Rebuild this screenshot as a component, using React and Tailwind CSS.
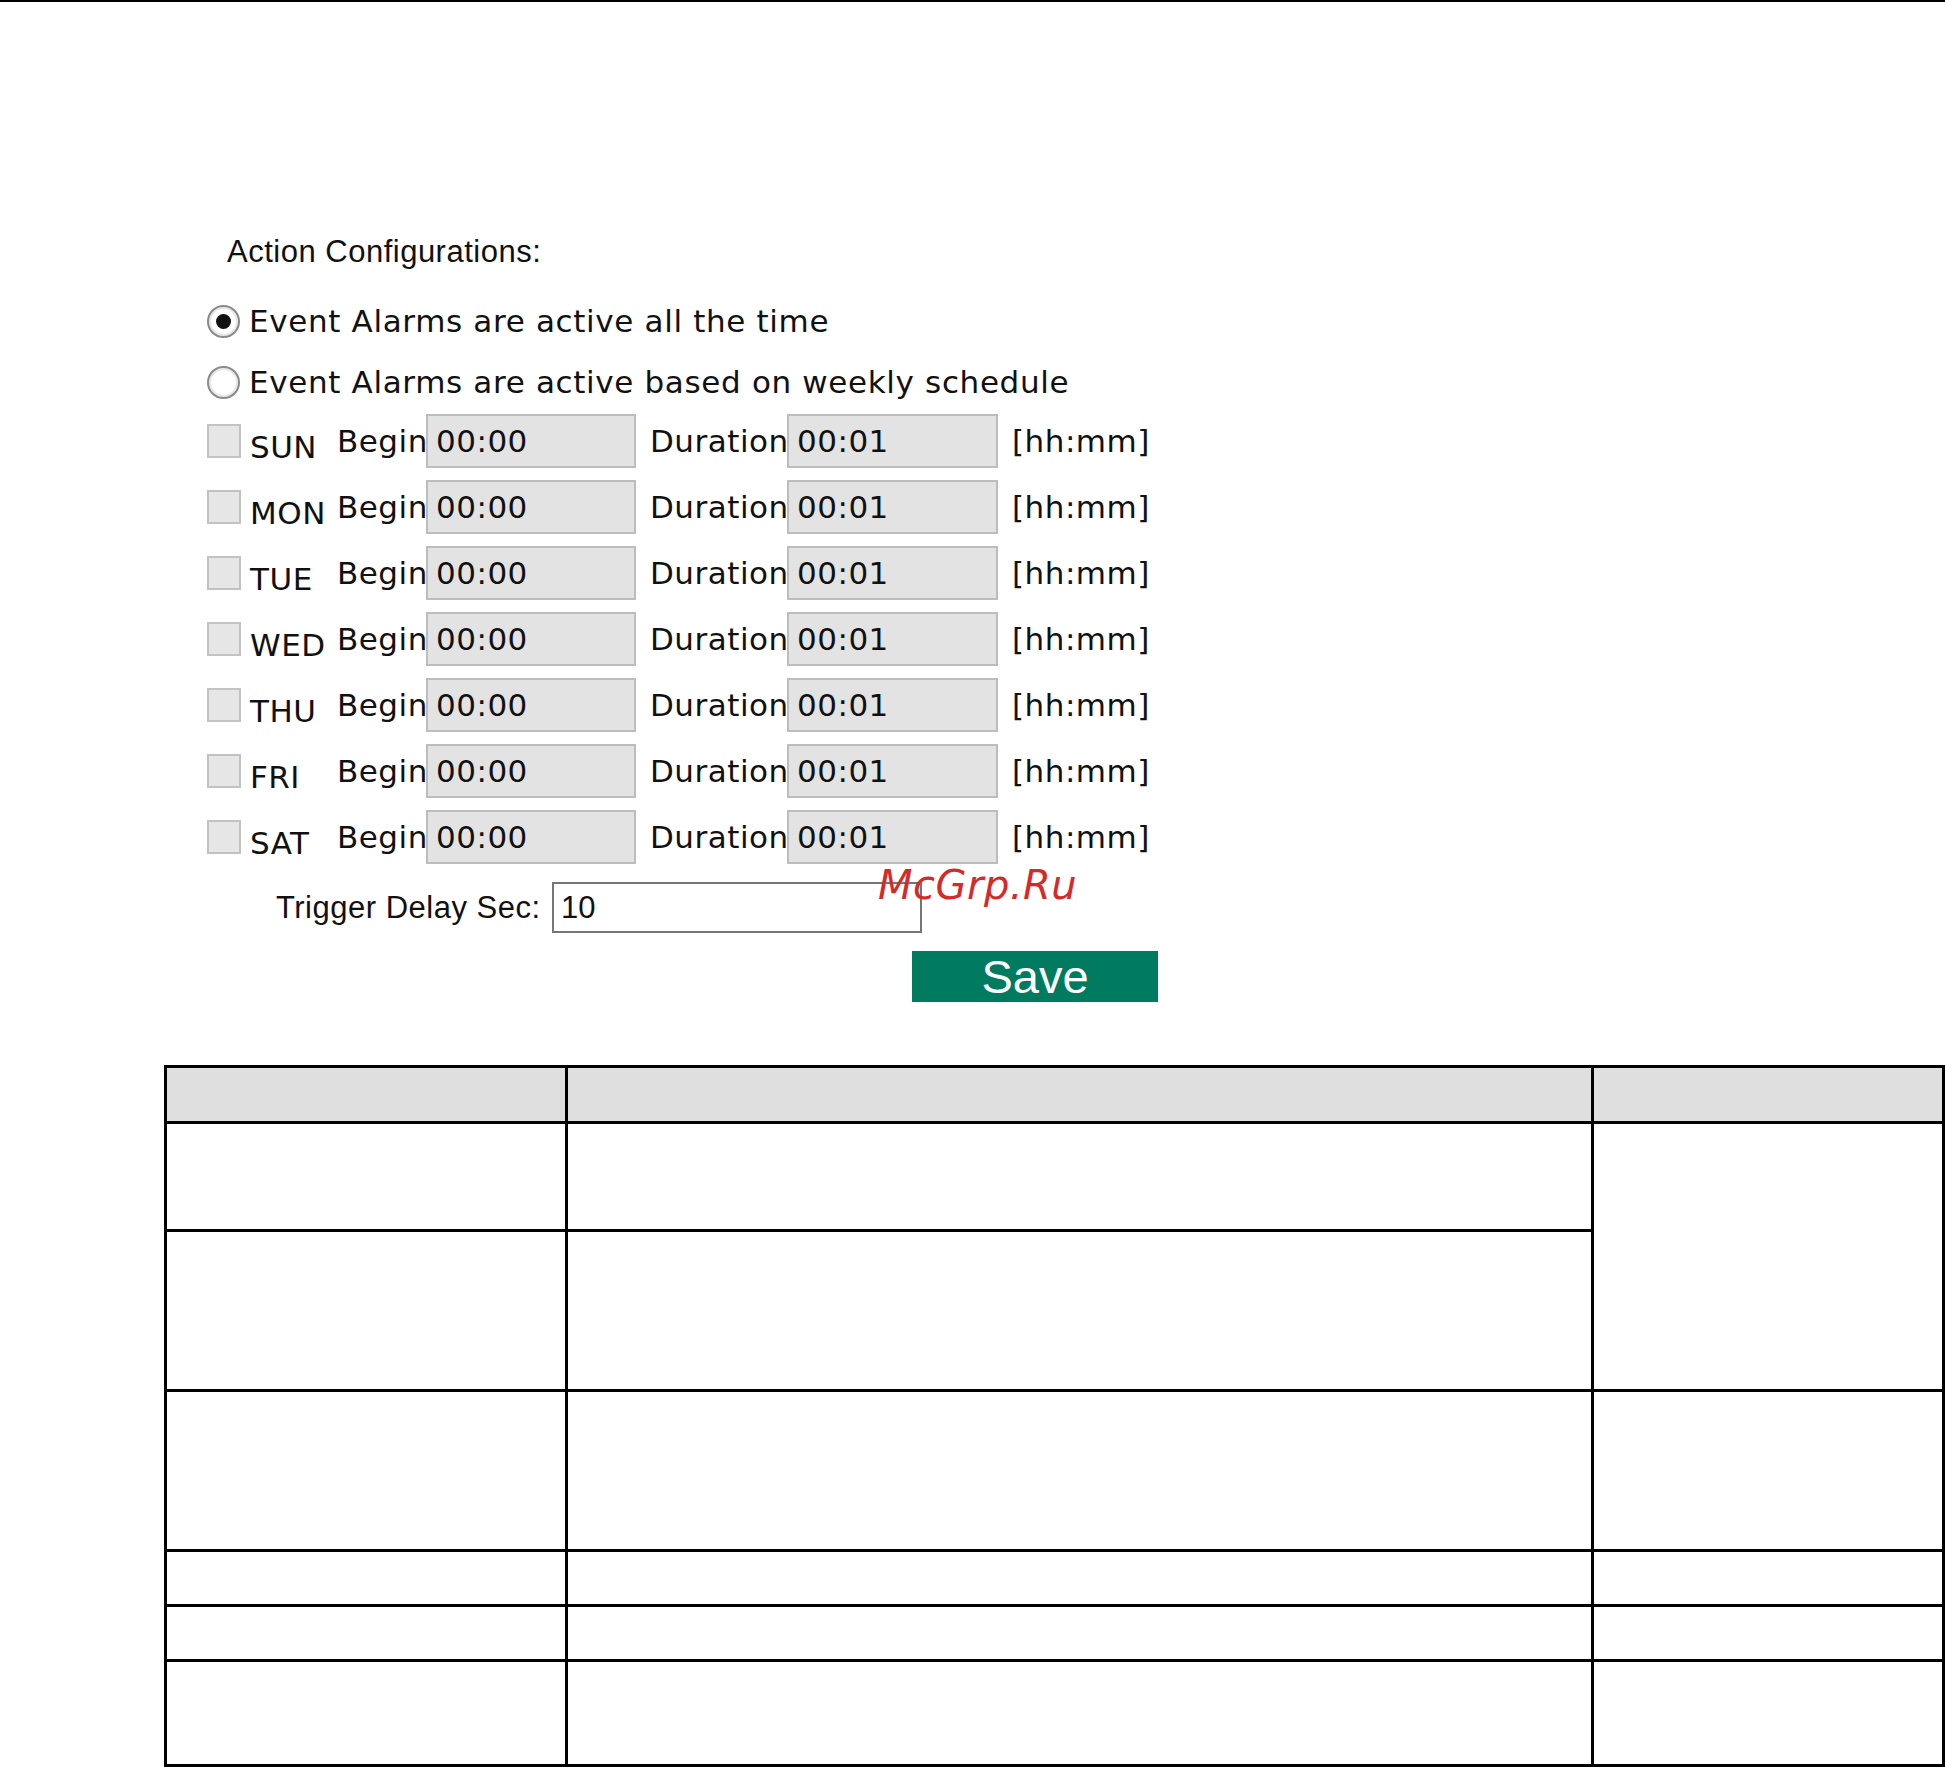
import React from "react";

const days = ["SUN", "MON", "TUE", "WED", "THU", "FRI", "SAT"];

function Radio({ checked }) {
  return (
    <span className="relative flex items-center justify-center w-[33px] h-[33px] shrink-0 rounded-full border-2 border-[#8a8a8a] bg-white shadow-[inset_0_0_0_2px_#e8e8e8]">
      {checked && <span className="w-[15px] h-[15px] rounded-full bg-[#111]" />}
    </span>
  );
}

function DayRow({ day }) {
  return (
    <div className="flex items-center h-[54px]">
      <span className="w-[34px] h-[34px] shrink-0 border-2 border-[#c2c2c2] bg-[#e6e6e6]" />
      <span className="ml-[9px] w-[87px] shrink-0 pt-[12px]">{day}</span>
      <span className="w-[89px] shrink-0">Begin</span>
      <input
        readOnly
        value="00:00"
        className="w-[210px] h-[54px] shrink-0 border-2 border-[#bdbdbd] bg-[#e3e3e3] pl-[8px] text-[#111] outline-none"
      />
      <span className="ml-[14px] w-[137px] shrink-0">Duration</span>
      <input
        readOnly
        value="00:01"
        className="w-[211px] h-[54px] shrink-0 border-2 border-[#bdbdbd] bg-[#e3e3e3] pl-[8px] text-[#111] outline-none"
      />
      <span className="ml-[14px] shrink-0">[hh:mm]</span>
    </div>
  );
}

export default function App() {
  return (
    <div className="relative w-[1945px] h-[1767px] overflow-hidden bg-white text-[#111]">
      <div className="h-[2px] bg-black" />

      <div className="mt-[232px] pl-[227px] h-[36px] text-[31px] leading-[36px] tracking-[0.5px] font-['Liberation_Sans',Arial,sans-serif]">
        Action Configurations:
      </div>

      <div className="pl-[207px] font-['DejaVu_Sans',Verdana,sans-serif] text-[31px] leading-[36px] tracking-[0.5px]">
        <div className="mt-[31px] flex items-center h-[40px] gap-[9px]">
          <Radio checked />
          <span className="tracking-[0.65px]">Event Alarms are active all the time</span>
        </div>
        <div className="mt-[21px] flex items-center h-[40px] gap-[9px]">
          <Radio />
          <span className="tracking-[0.65px]">Event Alarms are active based on weekly schedule</span>
        </div>

        <div className="mt-[12px] flex flex-col gap-[12px]">
          {days.map((d) => (
            <DayRow key={d} day={d} />
          ))}
        </div>
      </div>

      <div className="mt-[18px] ml-[276px] flex items-center h-[51px] font-['Liberation_Sans',Arial,sans-serif] text-[31px] leading-[36px] tracking-[0.5px]">
        <span className="w-[261px] shrink-0 text-right whitespace-nowrap">Trigger Delay Sec:</span>
        <input
          readOnly
          value="10"
          className="ml-[15px] w-[370px] h-[51px] border-2 border-[#767676] bg-white pl-[7px] text-[#111] outline-none tracking-normal"
        />
      </div>

      <div className="mt-[18px] ml-[912px]">
        <button className="w-[246px] h-[51px] bg-[#007b5f] text-white text-[47px] leading-none font-['Liberation_Sans',Arial,sans-serif] flex items-center justify-center">
          Save
        </button>
      </div>

      <div className="mt-[63px] ml-[164px] w-[1781px] grid grid-cols-[401px_1026px_1fr] grid-rows-[56px_108px_160px_160px_55px_55px_105px] border-t-[3px] border-l-[3px] border-black">
        <div className="border-r-[3px] border-b-[3px] border-black bg-[#dfdfdf]" />
        <div className="border-r-[3px] border-b-[3px] border-black bg-[#dfdfdf]" />
        <div className="border-r-[3px] border-b-[3px] border-black bg-[#dfdfdf]" />

        <div className="border-r-[3px] border-b-[3px] border-black" />
        <div className="border-r-[3px] border-b-[3px] border-black" />
        <div className="row-span-2 border-r-[3px] border-b-[3px] border-black" />

        <div className="border-r-[3px] border-b-[3px] border-black" />
        <div className="border-r-[3px] border-b-[3px] border-black" />

        <div className="border-r-[3px] border-b-[3px] border-black" />
        <div className="border-r-[3px] border-b-[3px] border-black" />
        <div className="border-r-[3px] border-b-[3px] border-black" />

        <div className="border-r-[3px] border-b-[3px] border-black" />
        <div className="border-r-[3px] border-b-[3px] border-black" />
        <div className="border-r-[3px] border-b-[3px] border-black" />

        <div className="border-r-[3px] border-b-[3px] border-black" />
        <div className="border-r-[3px] border-b-[3px] border-black" />
        <div className="border-r-[3px] border-b-[3px] border-black" />

        <div className="border-r-[3px] border-b-[3px] border-black" />
        <div className="border-r-[3px] border-b-[3px] border-black" />
        <div className="border-r-[3px] border-b-[3px] border-black" />
      </div>

      <div className="absolute left-[878px] top-[865px] text-[40px] leading-[40px] italic text-[#d42a2a] font-['DejaVu_Sans',Verdana,sans-serif] tracking-[0.5px] pointer-events-none">
        McGrp.Ru
      </div>
    </div>
  );
}
